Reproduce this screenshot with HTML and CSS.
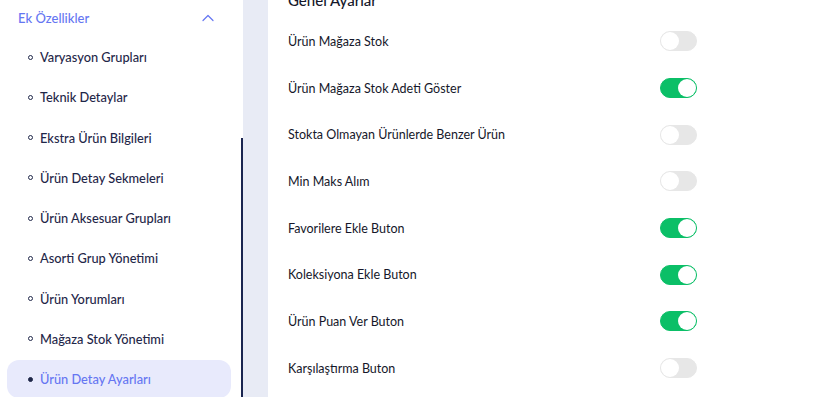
FILE: index.html
```html
<!DOCTYPE html>
<html lang="tr">
  <head>
    <meta charset="UTF-8">
    <meta name="viewport" content="width=device-width, initial-scale=1.0">
    <title>Ürün Detay Ayarları</title>
    <link rel="stylesheet" href="styles.css">
  </head>
  <body>
    <div class="layout">
      <nav class="sidebar" aria-label="Menü">
        <div class="sidebar__group">
          <span class="sidebar__group__title">Ek Özellikler</span>
          <svg class="sidebar__group__chevron" width="12" height="8" viewBox="0 0 12 8" aria-hidden="true">
            <path d="M1 6.5 L6 1.5 L11 6.5" fill="none" stroke="currentColor" stroke-width="1.2" stroke-linecap="round" stroke-linejoin="round"/>
          </svg>
        </div>
        <ul class="sidebar__list">
          <li class="sidebar__item"><a class="sidebar__link" href="#">Varyasyon Grupları</a></li>
          <li class="sidebar__item"><a class="sidebar__link" href="#">Teknik Detaylar</a></li>
          <li class="sidebar__item"><a class="sidebar__link" href="#">Ekstra Ürün Bilgileri</a></li>
          <li class="sidebar__item"><a class="sidebar__link" href="#">Ürün Detay Sekmeleri</a></li>
          <li class="sidebar__item"><a class="sidebar__link" href="#">Ürün Aksesuar Grupları</a></li>
          <li class="sidebar__item"><a class="sidebar__link" href="#">Asorti Grup Yönetimi</a></li>
          <li class="sidebar__item"><a class="sidebar__link" href="#">Ürün Yorumları</a></li>
          <li class="sidebar__item"><a class="sidebar__link" href="#">Mağaza Stok Yönetimi</a></li>
          <li class="sidebar__item sidebar__item--active"><a class="sidebar__link" href="#">Ürün Detay Ayarları</a></li>
        </ul>
      </nav>

      <main class="panel">
        <h2 class="panel__title">Genel Ayarlar</h2>
        <ul class="settings">
          <li class="settings__row">
            <span class="settings__label">Ürün Mağaza Stok</span>
            <label class="switch"><input type="checkbox"><span class="switch__track"></span></label>
          </li>
          <li class="settings__row">
            <span class="settings__label">Ürün Mağaza Stok Adeti Göster</span>
            <label class="switch"><input type="checkbox" checked><span class="switch__track"></span></label>
          </li>
          <li class="settings__row">
            <span class="settings__label">Stokta Olmayan Ürünlerde Benzer Ürün</span>
            <label class="switch"><input type="checkbox"><span class="switch__track"></span></label>
          </li>
          <li class="settings__row">
            <span class="settings__label">Min Maks Alım</span>
            <label class="switch"><input type="checkbox"><span class="switch__track"></span></label>
          </li>
          <li class="settings__row">
            <span class="settings__label">Favorilere Ekle Buton</span>
            <label class="switch"><input type="checkbox" checked><span class="switch__track"></span></label>
          </li>
          <li class="settings__row">
            <span class="settings__label">Koleksiyona Ekle Buton</span>
            <label class="switch"><input type="checkbox" checked><span class="switch__track"></span></label>
          </li>
          <li class="settings__row">
            <span class="settings__label">Ürün Puan Ver Buton</span>
            <label class="switch"><input type="checkbox" checked><span class="switch__track"></span></label>
          </li>
          <li class="settings__row">
            <span class="settings__label">Karşılaştırma Buton</span>
            <label class="switch"><input type="checkbox"><span class="switch__track"></span></label>
          </li>
        </ul>
      </main>
    </div>
  </body>
</html>
```

FILE: styles.css
```css
:root {
  --swatch-white: #fff;
  --swatch-page: #e8ebf5;
  --swatch-navy: #1f2749;
  --swatch-ink: #15172a;
  --swatch-accent: #6576f2;
  --swatch-accent-soft: #e8eafc;
  --swatch-green: #0bbf67;
  --swatch-off: #e7e7e7;
  --swatch-scroll: #1a2550;

  --font-main: "Lato", "Open Sans", Arial, sans-serif;
}

*, *::before, *::after {
  box-sizing: border-box;
}

html, body {
  margin: 0;
  padding: 0;
  height: 100%;
  overflow: hidden;
  font-family: var(--font-main);
  background-color: var(--swatch-page);
}

ul {
  list-style: none;
  margin: 0;
  padding: 0;
}

.layout {
  display: flex;
  height: 397px;
  gap: 25px;
}

/* Sidebar */
.sidebar {
  position: relative;
  width: 243px;
  flex-shrink: 0;
  padding: 0 12px 0 7px;
  background-color: var(--swatch-white);
}
/* scrollbar thumb drawn over the sidebar edge */
.sidebar::after {
  content: "";
  position: absolute;
  top: 138px;
  bottom: 0;
  right: 0;
  width: 2px;
  background-color: var(--swatch-scroll);
}

.sidebar__group {
  display: flex;
  align-items: center;
  justify-content: space-between;
  height: 36px;
  padding: 0 17px 0 11px;
  color: var(--swatch-accent);
}
.sidebar__group__title {
  font-size: 13px;
  font-weight: 500;
}

.sidebar__list {
  padding-top: 2px;
}

.sidebar__item {
  height: 40.25px;
}

.sidebar__link {
  display: flex;
  align-items: center;
  gap: 7px;
  height: 38px;
  padding-left: 21px;
  border-radius: 12px;
  font-size: 12.8px;
  font-weight: 500;
  color: var(--swatch-navy);
  text-decoration: none;
}
.sidebar__link::before {
  content: "";
  width: 5px;
  height: 5px;
  border: 1.2px solid var(--swatch-navy);
  border-radius: 50%;
}

.sidebar__item--active .sidebar__link {
  background-color: var(--swatch-accent-soft);
  color: var(--swatch-accent);
}
.sidebar__item--active .sidebar__link::before {
  background-color: var(--swatch-navy);
}

/* Panel */
.panel {
  flex: 1;
  padding: 0 20px;
  background-color: var(--swatch-white);
}

.panel__title {
  margin: -9px 0 0;
  height: 18px;
  font-size: 15px;
  font-weight: 500;
  line-height: 18px;
  color: var(--swatch-ink);
}

.settings {
  width: 409px;
  padding-top: 9px;
}

.settings__row {
  display: flex;
  align-items: center;
  justify-content: space-between;
  height: 46.7px;
}

.settings__label {
  font-size: 12.5px;
  color: var(--swatch-ink);
}

/* Toggle switch */
.switch {
  position: relative;
  display: block;
  width: 37px;
  height: 20px;
}
.switch input {
  position: absolute;
  opacity: 0;
  width: 0;
  height: 0;
}
.switch__track {
  display: block;
  width: 100%;
  height: 100%;
  border-radius: 10px;
  background-color: var(--swatch-off);
  border: 1px solid var(--swatch-off);
}
.switch__track::after {
  content: "";
  position: absolute;
  top: 1px;
  left: 1px;
  width: 18px;
  height: 18px;
  border-radius: 50%;
  background-color: var(--swatch-white);
}
.switch input:checked + .switch__track {
  background-color: var(--swatch-green);
  border-color: var(--swatch-green);
}
.switch input:checked + .switch__track::after {
  left: 18px;
}
```
